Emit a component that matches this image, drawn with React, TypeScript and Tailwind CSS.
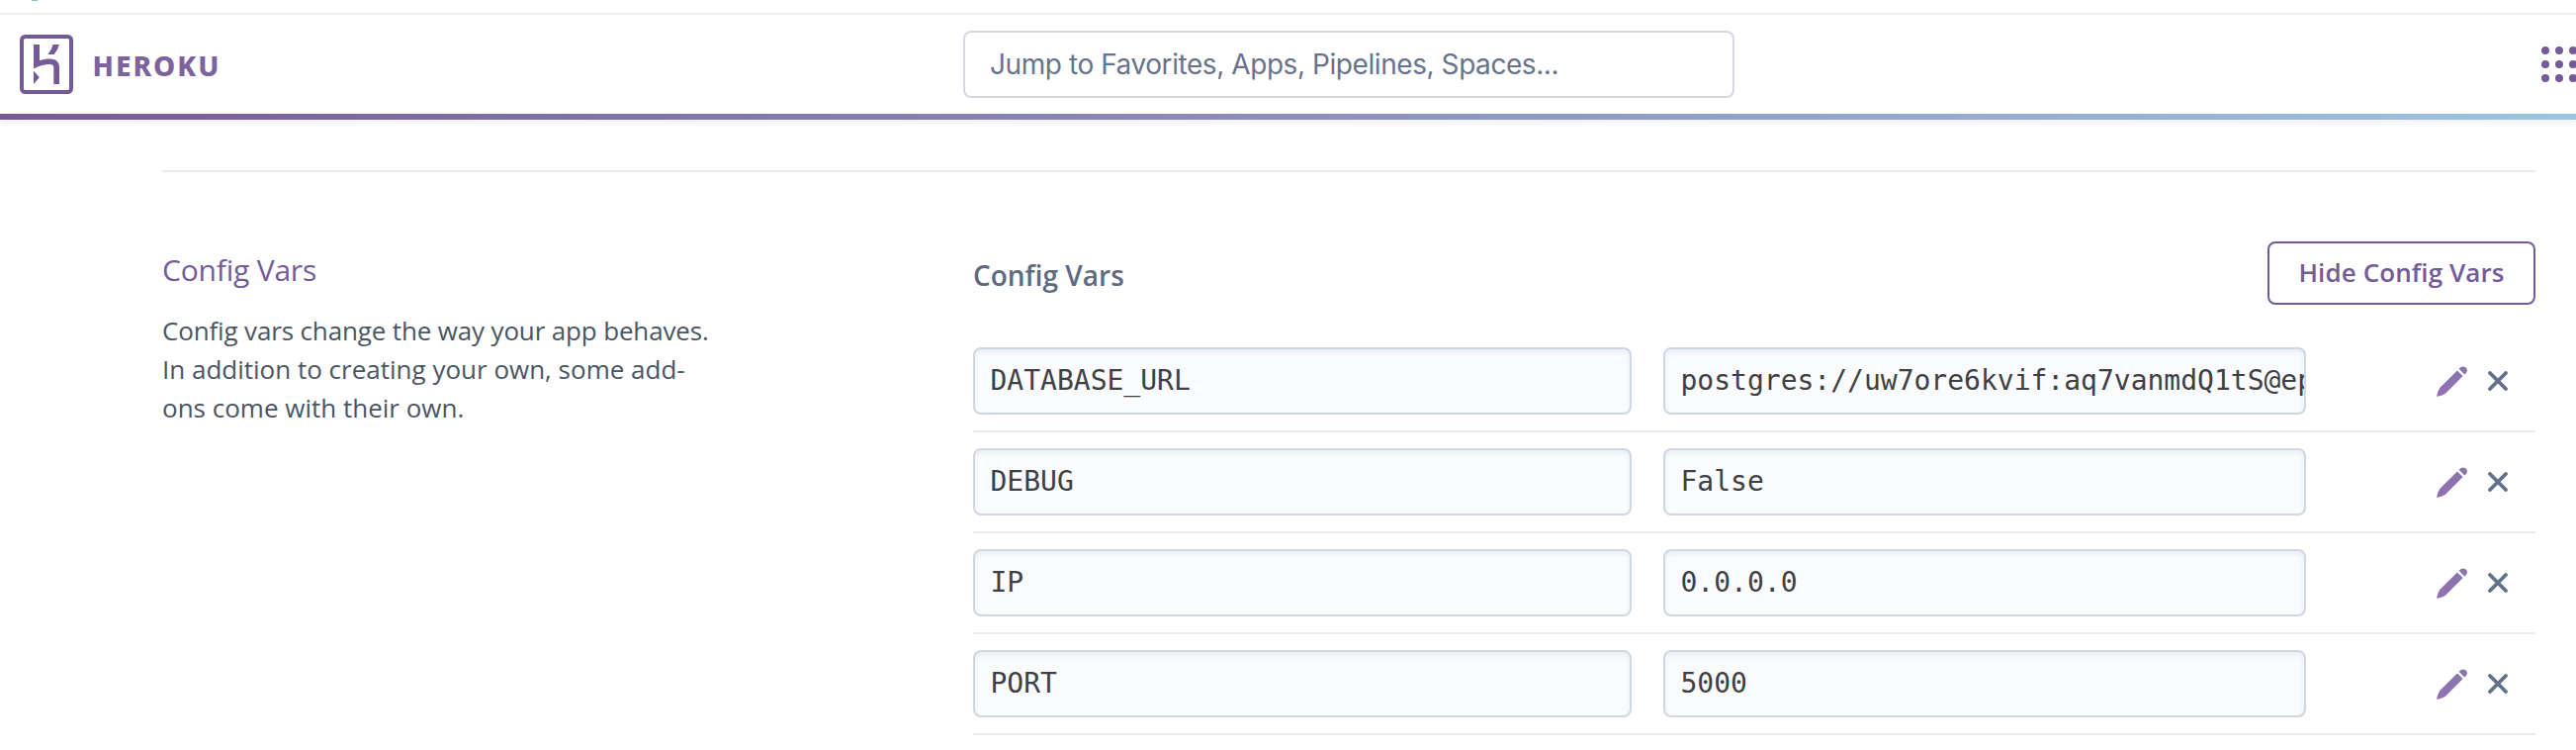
const vars = [
  { name: "DATABASE_URL", value: "postgres://uw7ore6kvif:aq7vanmdQ1tS@ep" },
  { name: "DEBUG", value: "False" },
  { name: "IP", value: "0.0.0.0" },
  { name: "PORT", value: "5000" },
];

function HerokuLogo() {
  return (
    <svg width="54" height="60" viewBox="0 0 54 60" fill="none" className="shrink-0 text-[#745b98]">
      <rect x="2" y="2" width="50" height="56" rx="3.5" stroke="currentColor" strokeWidth="4" />
      <path
        fill="currentColor"
        d="M14 10H20V26.300C23.200 25.300 27 24.600 30.600 24.600C34 24.600 36.500 25.800 37.900 27.200C40 29.400 40 32 40 33V50H34.300V33.300C34.300 31.400 33.200 30 30.400 30C25 30 19 32.100 18.200 32.500L14 34.400ZM33.500 10H39.800C39 13.500 37.200 16.900 34.600 20H28.400C30.900 16.900 32.700 13.500 33.500 10ZM14 36.600L19.800 43.300L14 50Z"
      />
    </svg>
  );
}

function DotGrid() {
  return (
    <div className="grid shrink-0 grid-cols-[8px_8px_8px] gap-1.5">
      {Array.from({ length: 9 }, (_, i) => (
        <span key={i} className="size-2 rounded-full bg-[#745b98]" />
      ))}
    </div>
  );
}

function Pencil() {
  return (
    <svg width="31" height="31" viewBox="0 0 31 31" className="shrink-0">
      <defs>
        <linearGradient id="pencil" x1="0" y1="0" x2="0" y2="1">
          <stop offset="0" stopColor="#8676ab" />
          <stop offset="1" stopColor="#9370b5" />
        </linearGradient>
      </defs>
      <path
        fill="url(#pencil)"
        d="M0 30.700Q1 25.400 3.200 21.900L20.900 4.400 26.600 10 9.200 27.500Q6.300 29.900 0 30.700ZM22.600 2.700Q24.700.4 27 .4 30.800.9 31 4.400 30.800 6.400 28.300 8.400Z"
      />
    </svg>
  );
}

function Cross() {
  return (
    <svg width="20" height="20" viewBox="0 0 20 20" className="shrink-0">
      <path d="M2 2 18 18M18 2 2 18" stroke="#62708a" strokeWidth="3.800" strokeLinecap="round" />
    </svg>
  );
}

function Field({ text, className }: { text: string; className: string }) {
  return (
    <div
      className={
        "h-[68px] overflow-hidden rounded-lg border-2 border-[#d0d6e2] bg-[#fafbfd] pl-[15.5px] font-['DejaVu_Sans_Mono',monospace] text-[28px] leading-16 whitespace-nowrap text-[#3f4043] shadow-[inset_0_3px_5px_#e9edf5] " +
        className
      }
    >
      {text}
    </div>
  );
}

export default function App() {
  return (
    <div className="h-[758px] w-full overflow-hidden bg-white font-['Open_Sans',sans-serif]">
      <div className="h-[13px] pl-8">
        <div className="h-px w-1.5 bg-[#8fb9cf]" />
      </div>
      <header className="flex h-[102px] items-center overflow-hidden border-t-2 border-[#eceef2] pl-5">
        <HerokuLogo />
        <span className="w-[900px] shrink-0 pt-0.5 pl-[19.5px] font-['Noto_Sans',sans-serif] text-[28px] leading-8 font-extrabold tracking-[2px] text-[#7d62a0]">
          HEROKU
        </span>
        <div className="h-[68px] w-[780px] shrink-0 rounded-lg border-2 border-[#d3d8e3] pl-[25px] font-['Inter',sans-serif] text-[28px] leading-16 tracking-[-0.43px] text-[#68738b]">
          Jump to Favorites, Apps, Pipelines, Spaces...
        </div>
        <div className="w-[816px] shrink-0" />
        <DotGrid />
      </header>
      <div className="h-1.5 bg-linear-to-r from-[#775998] to-[#9cc5e0] shadow-[0_3px_7px_rgba(0,0,0,0.08)]" />
      <main className="mr-[41px] ml-[164px] pt-[51px]">
        <div className="h-0.5 bg-[#e8ebef]" />
        <div className="flex">
          <section className="w-[820px] pt-[79px]">
            <h2 className="text-[30px] leading-10 tracking-[-0.2px] text-[#745b98]">Config Vars</h2>
            <p className="mt-[22px] w-[580px] text-[26px] leading-[39px] text-[#4b5563]">
              <span className="tracking-[-0.15px]">Config vars change the way your app behaves.</span>
              <br />
              In addition to creating your own, some add-
              <br />
              ons come with their own.
            </p>
          </section>
          <section className="w-[1580px] pt-[70px]">
            <div className="flex h-16 items-start justify-between">
              <h3 className="pt-3.5 text-[28px] leading-10 font-semibold text-[#5d6a82]">Config Vars</h3>
              <button className="h-16 w-[271px] rounded-lg border-2 border-[#745b98] pb-0.5 text-[26px] font-semibold tracking-[0.1px] text-[#745b98]">
                Hide Config Vars
              </button>
            </div>
            <div className="mt-[27px]">
              {vars.map((v) => (
                <div key={v.name} className="flex h-[102px] items-center border-b-2 border-[#e8eaee]">
                  <Field text={v.name} className="w-[666px]" />
                  <Field text={v.value} className="ml-8 w-[650px]" />
                  <div className="ml-[132px] flex items-center gap-[21px]">
                    <Pencil />
                    <Cross />
                  </div>
                </div>
              ))}
            </div>
          </section>
        </div>
      </main>
    </div>
  );
}
